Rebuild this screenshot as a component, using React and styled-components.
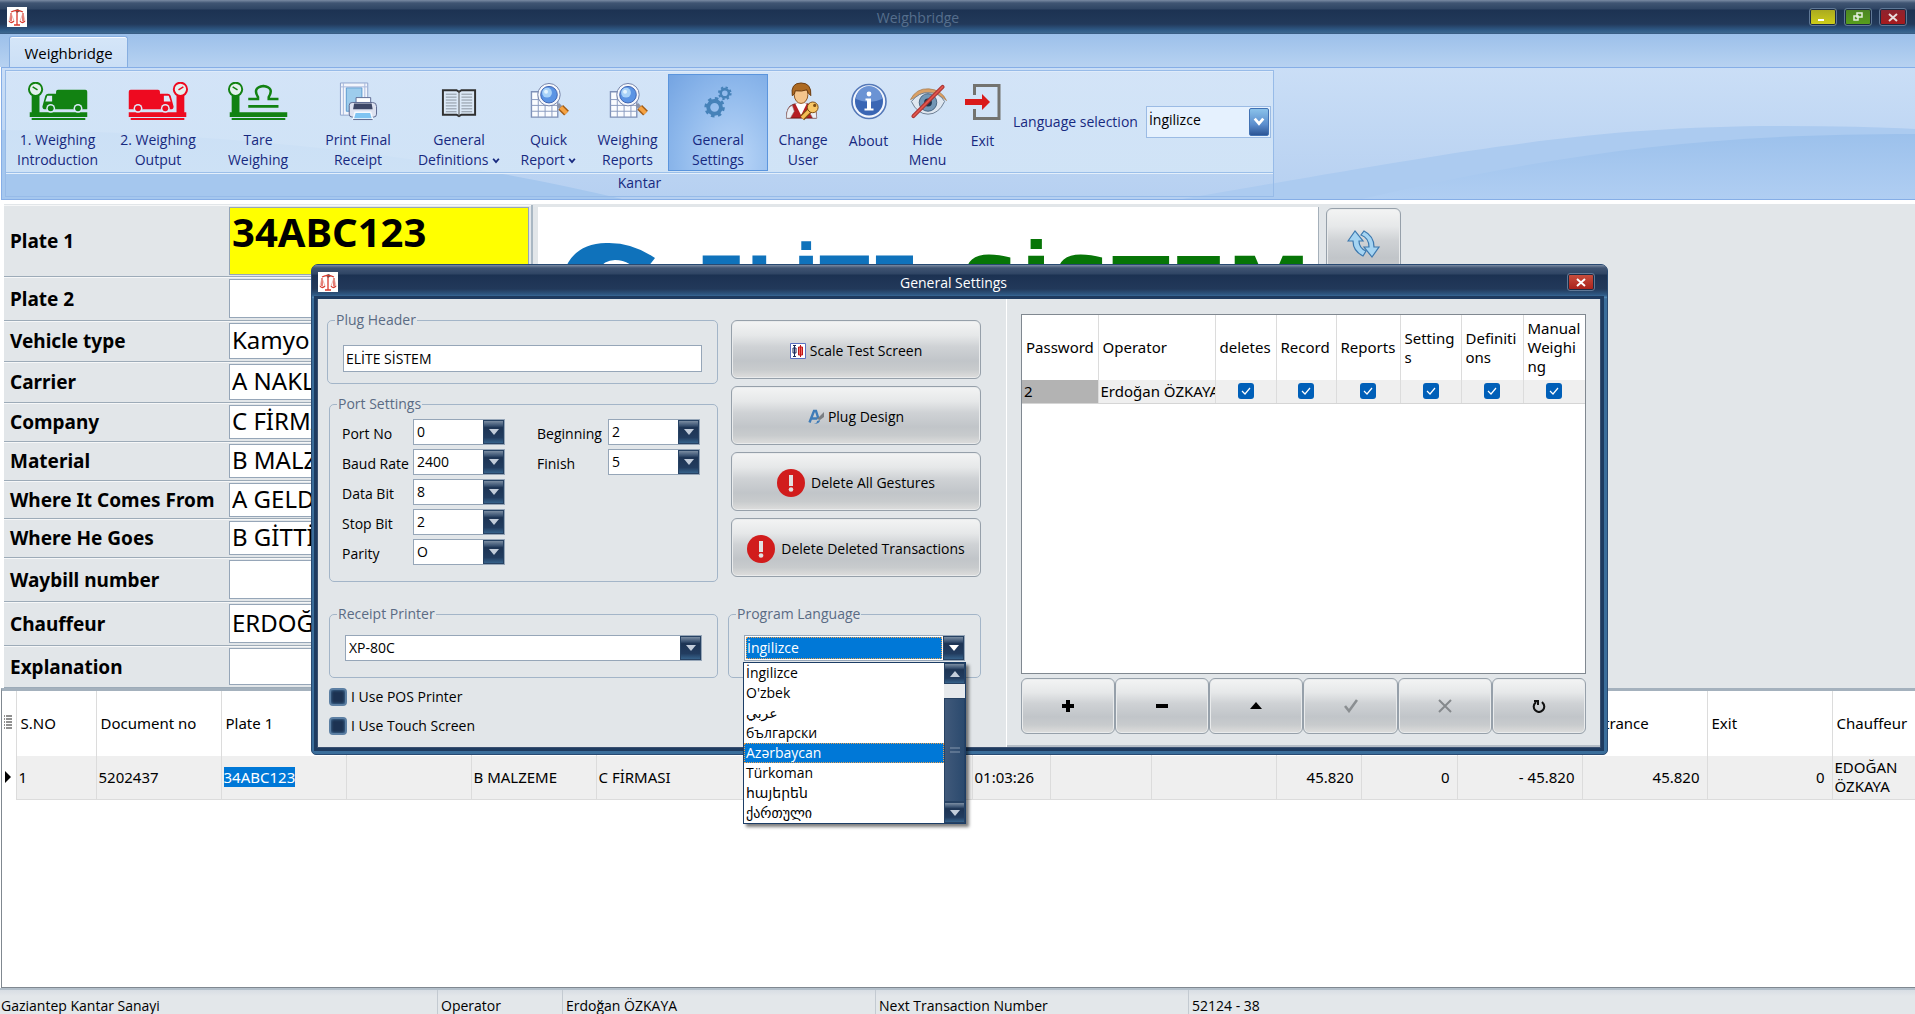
import React from 'react';
import styled, { createGlobalStyle, css } from 'styled-components';

const UI = `'Open Sans', 'Noto Sans', 'DejaVu Sans', sans-serif`;
const GRID = `'Noto Sans', 'DejaVu Sans', sans-serif`;
const NAVY = 'linear-gradient(#7a8ba3 0, #3f5472 3px, #2f4564 9px, #1c3252 10px, #22395a 24px, #2f5a86 30px, #5590bd 33px, #35547c 34px)';
const SILVER = 'linear-gradient(#f3f4f4 0, #e6e8e9 25%, #cfd2d5 45%, #c1c5c9 70%, #c8cbcd 85%, #dededd 100%)';

const GlobalStyle = createGlobalStyle`
  * { box-sizing: border-box; }
  body { margin: 0; background: #fff; font: 15px/20px ${UI}; color: #000; }
  button, input, select { font: inherit; color: inherit; margin: 0; }
  fieldset { margin: 0; min-width: 0; }
`;

const Page = styled.div`
  position: relative;
  display: flex;
  flex-direction: column;
  min-height: 100vh;
  overflow: hidden;
`;

const TitleBar = styled.header`
  display: grid;
  grid-template-columns: 100px 1fr 100px;
  align-items: center;
  height: 34px;
  padding: ${({ $dialog }) => ($dialog ? '0 0 0 6px' : '0 8px 0 7px')};
  background: ${({ $dialog }) => ($dialog ? NAVY : NAVY.replace('#5590bd', '#3d688f'))};
  border-radius: ${({ $dialog }) => ($dialog ? '5px 5px 0 0' : '0')};
  color: ${({ $dialog }) => ($dialog ? '#fff' : '#566f8d')};
`;

const TitleText = styled.h1`
  margin: 0;
  padding: ${({ $dialog }) => ($dialog ? '2px 18px 0 0' : '2px 84px 0 6px')};
  font-size: 14px;
  font-weight: 400;
  text-align: center;
`;

const WindowButtons = styled.div`
  display: flex;
  justify-content: flex-end;
  gap: 7px;
  padding-right: ${({ $dialog }) => ($dialog ? '12px' : '0')};
`;

const WindowButton = styled.button`
  display: grid;
  place-items: center;
  width: 28px;
  height: 18px;
  padding: 0;
  border: 1px solid #5f7896;
  border-radius: 3px;
  box-shadow: inset 0 0 0 1px #1b2b44;
  background: ${({ $tone }) => $tone};
`;

const TabStrip = styled.nav`
  display: flex;
  align-items: flex-end;
  height: 33px;
  padding-left: 9px;
  background: linear-gradient(#9cc0ea, #b7d2f1);
`;

const Tab = styled.button`
  width: 119px;
  height: 31px;
  padding: 1px 0 0;
  border: 1px solid #86aee0;
  border-bottom: 0;
  border-radius: 3px 3px 0 0;
  background: linear-gradient(#d5e6f8, #cbdff6);
  box-shadow: inset 0 1px #f6faff;
`;

const Ribbon = styled.section`
  display: grid;
  height: 133px;
  margin-left: 1px;
  border: 1px solid #86aee6;
  border-right: 0;
  background: #c5dbf4;
  & > * { grid-area: 1 / 1; }
`;

const Waves = styled.svg`
  width: 100%;
  height: 131px;
`;

const RibbonGroup = styled.div`
  display: flex;
  flex-direction: column;
  align-self: start;
  justify-self: start;
  margin: 2px 3px;
  border: 1px solid #97bbe8;
  box-shadow: inset 0 1px #f8fbff;
  z-index: 1;
`;

const RibbonItems = styled.div`
  display: flex;
  height: 101px;
  padding: 3px 1px 1px;
  background: linear-gradient(rgba(214, 230, 248, .75), rgba(212, 230, 247, .85));
`;

const GroupCaption = styled.div`
  height: 24px;
  border-top: 1px solid #9bbfe9;
  box-shadow: inset 0 1px #e4effb;
  color: #17297f;
  font-size: 14px;
  line-height: 20px;
  text-align: center;
`;

const RibbonButton = styled.button`
  display: flex;
  flex-direction: column;
  align-items: center;
  width: ${({ $width }) => $width}px;
  padding: 7px 0 0;
  border: 1px solid transparent;
  background: none;
  color: #17297f;
  font-size: 14px;
  white-space: pre;
  text-align: center;
  & > svg { height: 40px; margin-bottom: 9px; }
  ${({ $active }) => $active && css`
    border-color: #5b95dd;
    background: radial-gradient(ellipse at 65% 90%, #b4d2f6 10%, #8fb9ec 60%, #74a4e2);
  `}
`;

const LanguagePick = styled.label`
  display: flex;
  align-items: center;
  gap: 8px;
  padding: 0 1px 1px 4px;
  color: #17297f;
  font-size: 14px;
`;

const RibbonCombo = styled.span`
  display: grid;
  width: 125px;
  height: 32px;
  border: 1px solid #9bbbe4;
  background: #e5f1fe;
  & > * { grid-area: 1 / 1; }
  & > select {
    appearance: none;
    padding: 0 0 5px 2px;
    border: 0;
    background: none;
    color: #000;
  }
  & > span {
    display: grid;
    place-items: center;
    justify-self: end;
    width: 20px;
    margin: 1px;
    border: 1px solid #4272b3;
    border-radius: 2px;
    background: linear-gradient(#8ac2ea, #5b8dcd 60%, #2c5595);
    pointer-events: none;
  }
`;

const Workspace = styled.main`
  display: grid;
  grid-template-columns: 529px 789px 1fr;
  margin-left: 4px;
  padding-top: 5px;
  background: linear-gradient(#fff 4px, #e2e6e9 4px);
`;

const VehicleForm = styled.form`
  border-right: 2px solid #a9b7c3;
`;

const FormRow = styled.div`
  display: grid;
  grid-template-columns: 225px 1fr;
  height: ${({ $height }) => $height}px;
  padding: 2px 2px 2px 0;
  border-bottom: 1px solid #9dabb8;
  box-shadow: inset 0 1px #f6f7f8;
  & > label {
    align-self: center;
    padding-left: 6px;
    font: bold 19px/22px ${GRID};
  }
  & > input {
    min-width: 0;
    padding: 0 2px 2px;
    border: 1px solid #96a6b8;
    border-radius: 0;
    background: #fff;
    font: 24px/30px ${GRID};
  }
`;

const PlateRow = styled(FormRow)`
  & > input {
    padding-bottom: 18px;
    background: #ff0;
    font: bold 40px/48px ${GRID};
  }
`;

const LogoPane = styled.div`
  margin: 2px 3px 8px 5px;
  border-right: 1px solid #a5b0ba;
  background: #fff;
`;

const SilverButton = styled.button`
  display: flex;
  align-items: center;
  justify-content: center;
  gap: ${({ $gap }) => $gap || 4}px;
  padding: 0;
  border: 1px solid #96a0aa;
  border-radius: 6px;
  background: ${SILVER};
  box-shadow: inset 0 0 0 1px #e9ebec;
  font-size: 14px;
  white-space: nowrap;
`;

const ActionButton = styled(SilverButton)`
  padding-top: 2px;
`;

const RefreshButton = styled(SilverButton)`
  width: 75px;
  height: 72px;
  margin: 3px 4px;
`;

const TransactionPane = styled.section`
  flex: 1;
  margin-left: 1px;
  border: 1px solid #808890;
  border-top: 3px solid #a4b1bd;
  border-right: 0;
  background: #fff;
  overflow: hidden;
`;

const TransactionTable = styled.table`
  width: 100%;
  border-collapse: collapse;
  table-layout: fixed;
  font: 15px/19px ${GRID};
  th, td {
    padding: 0 7px 0 2px;
    border-right: 1px solid #dcdcdc;
    font-weight: 400;
    text-align: left;
  }
  th { height: 65px; padding-left: 4px; }
  td { height: 43px; background: #efefef; border-bottom: 1px solid #dcdcdc; }
  th:first-child, td:first-child { padding: 0 2px; background: #fff; border-bottom: 0; }
  th:last-child, td:last-child { border-right: 0; padding-right: 0; }
`;

const NumberCell = styled.td`
  && { text-align: right; }
`;

const Mark = styled.mark`
  background: #0078d7;
  color: #fff;
`;

const StatusBar = styled.footer`
  display: grid;
  grid-template-columns: 437px 125px 313px 313px 1fr;
  height: 26px;
  border-top: 2px solid #b3bfca;
  background: linear-gradient(#d8dee4, #e3e7ea 6px);
  font-size: 14px;
  & > span { padding: 6px 0 0 1px; white-space: nowrap; }
  & > span + span { padding-left: 3px; border-left: 1px solid #c3cad1; }
`;

/* dialog */

const Dialog = styled.div`
  position: absolute;
  top: 264px;
  left: 311px;
  right: 307px;
  border-radius: 7px 7px 5px 5px;
  border: 1px solid #294a72;
  background: #3b6e9b;
`;

const DialogBody = styled.div`
  display: grid;
  grid-template-columns: 689px 1fr;
  margin: 0 6px 6px 5px;
  border: 1px solid #3a5070;
  border-top: 0;
  box-shadow: 0 0 0 3px #1e3b60;
  background: #e2e6e9;
`;

const SettingsPane = styled.div`
  display: grid;
  grid-template-columns: 391px 253px;
  grid-template-rows: 282px 88px auto;
  align-content: start;
  column-gap: 10px;
  padding: 11px 0 7px 9px;
  border-right: 1px solid #fff;
`;

const GroupStack = styled.div`
  display: flex;
  flex-direction: column;
  gap: 10px;
`;

const Group = styled.fieldset`
  height: ${({ $height }) => $height}px;
  margin-left: ${({ $indent }) => $indent || 0}px;
  padding: 0 15px;
  border: 1px solid #a3b5c8;
  border-radius: 5px;
  & > legend {
    margin-left: -8px;
    padding: 0 1px;
    color: #5a6b84;
    font-size: 14px;
    line-height: 20px;
  }
`;

const HeaderInput = styled.input`
  width: 100%;
  height: 27px;
  margin-top: 15px;
  padding: 0 2px 1px;
  border: 1px solid #96a6b8;
  font-size: 14px;
`;

const PortGrid = styled.div`
  display: grid;
  grid-template-columns: 71px 92px 103px 92px;
  row-gap: 4px;
  margin: 5px -2px 0 -3px;
  align-items: center;
  font-size: 14px;
`;

const PortLabel = styled.label`
  padding: 3px 0 0 ${({ $second }) => ($second ? 32 : 0)}px;
  white-space: nowrap;
`;

const ComboSlot = styled.div`
  margin-top: 11px;
`;

const GroupSlot = styled.div`
  padding-top: 12px;
`;

const Combo = styled.span`
  position: relative;
  display: grid;
  width: 100%;
  height: 26px;
  border: 1px solid #96a6b8;
  background: #fff;
  font-size: 14px;
  & > * { grid-area: 1 / 1; }
  & > select {
    appearance: none;
    min-width: 0;
    padding: 0 0 1px 3px;
    border: 0;
    border-radius: 0;
    background: none;
    ${({ $open }) => $open && css`
      margin: 1px 22px 1px 1px;
      padding-left: 1px;
      background: #0078d7;
      color: #fff;
      outline: 1px dotted #e8a050;
      outline-offset: -1px;
    `}
  }
`;

const ArrowBox = styled.span`
  display: grid;
  place-items: center;
  justify-self: end;
  width: 21px;
  height: ${({ $height }) => $height || 24}px;
  border: 1px solid #274263;
  background: linear-gradient(#7b8da2, #3d5574 20%, #1d3454 30%, #223c5f 75%, #36628a);
  pointer-events: none;
`;

const Options = styled.ul`
  position: absolute;
  z-index: 2;
  top: 26px;
  left: -2px;
  width: 223px;
  margin: 0;
  padding: 0 21px 0 0;
  border: 1px solid #1c3d66;
  background: #fff;
  box-shadow: 3px 3px 3px rgba(0, 0, 0, .5);
  list-style: none;
`;

const Option = styled.li`
  height: 20px;
  padding-left: 2px;
  line-height: 20px;
  ${({ $selected }) => $selected && css`
    background: #0078d7;
    color: #fff;
    outline: 1px dotted #e8a050;
    outline-offset: -1px;
  `}
`;

const ScrollBar = styled.li`
  position: absolute;
  top: 0;
  right: 0;
  bottom: 0;
  display: flex;
  flex-direction: column;
  width: 21px;
  background: #e6e9ec;
`;

const ScrollThumb = styled.div`
  display: grid;
  place-items: center;
  flex: 1;
  margin-top: 14px;
  border: 1px solid #274263;
  background: linear-gradient(90deg, #40597a, #2b4a6e);
`;

const CheckList = styled.div`
  padding: 2px 0 0 2px;
`;

const Check = styled.label`
  display: flex;
  align-items: center;
  gap: 4px;
  height: 29px;
  font-size: 14px;
  & > input {
    appearance: none;
    width: 18px;
    height: 18px;
    border: 2px solid #5c7fa3;
    border-radius: 4px;
    background: #1c3252;
    box-shadow: inset 0 0 3px #4d80ab;
  }
`;

const ActionStack = styled.div`
  display: grid;
  grid-auto-rows: 59px;
  row-gap: 7px;
  align-content: start;
  padding: 10px 0 0 3px;
`;

const OperatorPane = styled.div`
  display: flex;
  flex-direction: column;
  padding: 15px 14px 11px 14px;
  border-bottom: 2px solid #b5bec7;
  min-width: 0;
`;

const OperatorBox = styled.div`
  height: 360px;
  border: 1px solid #808890;
  background: #fff;
  overflow: hidden;
`;

const OperatorTable = styled.table`
  width: 100%;
  border-collapse: collapse;
  table-layout: fixed;
  font: 15px/19px ${GRID};
  th, td {
    height: 23px;
    padding: 0 2px 0 4px;
    border-right: 1px solid #dcdcdc;
    font-weight: 400;
    text-align: left;
  }
  th { height: 65px; overflow-wrap: anywhere; }
  td { padding: 0 0 0 2px; background: #efefef; border-bottom: 1px solid #d5d5d5; overflow: hidden; white-space: nowrap; }
  td:first-child { background: #b3b3b3; }
  td:nth-child(n + 3) { padding: 0; line-height: 16px; text-align: center; }
`;

const TickBox = styled.input`
  appearance: none;
  display: inline-block;
  vertical-align: top;
  width: 16px;
  height: 16px;
  border-radius: 3px;
  background: #005fb8 url("data:image/svg+xml,%3Csvg xmlns='http://www.w3.org/2000/svg' viewBox='0 0 16 16'%3E%3Cpath d='M4 8l3 3 5-6' fill='none' stroke='white' stroke-width='1.2'/%3E%3C/svg%3E");
`;

const NavButtons = styled.div`
  display: grid;
  grid-template-columns: repeat(6, 1fr);
  height: 56px;
  margin-top: 4px;
`;

/* icons */

const ScalesIcon = () => (
  <svg width="20" height="20" viewBox="0 0 20 20">
    <path d="M0 0h20v20H0z" fill="#fff" />
    <path d="M8 3l3-1 2 2-3 2z" fill="#555" />
    <path d="M10 5v13M7 18h6M4 5q6-3 12 0M4 6v8M16 6v8M2 14q2 3 5 0M13 14q2 3 5 0" fill="none" stroke="#d8382c" strokeWidth="1.3" />
    <path d="M4 6L2 14M4 6l3 8M16 6l-3 8M16 6l2 8" stroke="#e59a90" strokeWidth=".7" />
  </svg>
);

const Platform = ({ color, mirrored, children }) => (
  <svg width="62" height="40" viewBox="0 0 62 40">
    <g transform={mirrored ? 'matrix(-1 0 0 1 62 0)' : undefined} fill={color}>
      <circle cx="8" cy="7.5" r="6.8" fill="#e4f0ee" stroke={color} strokeWidth="2" />
      <path d="M5 5l5 3" stroke={color} strokeWidth="1.6" />
      <path d="M4 14h8v17H4zM2 31h59v5H2zM4 37h55v2H4z" />
      {children}
    </g>
  </svg>
);

const Truck = () => (
  <>
    <path d="M29 10q0-2 2-2h28q2 0 2 2v18H18q-3 0-3-3l3-11q1-2 3-2h8z" />
    <path d="M20 14h5v6h-7z" fill="#dcebfa" />
    <circle cx="23.5" cy="27" r="4.500" fill="#dcebfa" />
    <circle cx="23.5" cy="27" r="3" />
    <circle cx="51.5" cy="27" r="4.500" fill="#dcebfa" />
    <circle cx="51.5" cy="27" r="3" />
  </>
);

const LibraSign = ({ color }) => (
  <path d="M21 17.500h10v-2q-6-10 5.500-11.500 11.500 1.500 5.500 11.500v2h10M21 25h31" fill="none" stroke={color} strokeWidth="2.600" />
);

const PrintIcon = () => (
  <svg width="40" height="40" viewBox="0 0 40 40">
    <path d="M2 1h28v33H2z" fill="#f2f5fc" stroke="#8fa3cc" />
    <path d="M8 6h16v24H8z" fill="#9dccec" stroke="#5b9bd0" />
    <path d="M5 1v33M27 1v33M2 5h28" stroke="#a9b9dc" />
    <path d="M18 16h15v8H18z" fill="#fff" stroke="#5f6c94" />
    <path d="M11 24q0-3 3-3h21q4 0 4 4v8q0 3-3 3H14q-3 0-3-3z" fill="#dde2f0" stroke="#5b688f" />
    <path d="M16 22h18l1 6H15z" fill="#3d4766" />
    <path d="M17 31h16l2 7H15z" fill="#7fc4f2" stroke="#f5f9ff" strokeWidth="1.5" />
    <path d="M15 38.500h20" stroke="#5b688f" />
  </svg>
);

const BookIcon = () => (
  <svg width="36" height="40" viewBox="0 0 36 40">
    <path d="M1.500 8.500h14l2.500 1.500 2.500-1.500h14v25h-14L18 35l-2.500-1.500h-14z" fill="#dbe8f6" stroke="#303030" strokeWidth="2" />
    <path d="M18 9v26" stroke="#555" />
    <path d="M4.500 12.500h11M4.500 15.500h11M4.500 18.500h11M4.500 21.500h11M4.500 24.500h11M4.500 27.500h11M4.500 30.500h11M20.500 12.500h11M20.500 15.500h11M20.500 18.500h11M20.500 21.500h11M20.500 24.500h11M20.500 27.500h11M20.500 30.500h11" stroke="#8a939d" />
  </svg>
);

const ReportIcon = () => (
  <svg width="40" height="40" viewBox="0 0 40 40">
    <path d="M2 10h27v26H2z" fill="#fafcff" stroke="#7f91b8" strokeWidth="1.4" />
    <path d="M2 18h27M2 24h27M2 30h27M9 10v26M16 10v26M23 10v26" stroke="#8b9cc0" />
    <path d="M29 23l4 4" stroke="#8a93a8" strokeWidth="4" />
    <path d="M32 26l6 6" stroke="#a35c14" strokeWidth="7" />
    <path d="M32 26l6 6" stroke="#f5a344" strokeWidth="4" />
    <circle cx="20" cy="13" r="11.500" fill="#f6f8fc" stroke="#7382a8" />
    <circle cx="20" cy="13" r="8.500" fill="#5b94e4" stroke="#3c62b0" />
    <circle cx="18" cy="11" r="5" fill="#a9d3f9" />
    <circle cx="17" cy="10" r="2" fill="#e4f4ff" />
  </svg>
);

const GearsIcon = () => (
  <svg width="32" height="40" viewBox="0 0 32 40" fill="none" stroke="#4682b9">
    <circle cx="12.5" cy="26" r="6.500" strokeWidth="4" />
    <circle cx="12.5" cy="26" r="9" strokeWidth="3" strokeDasharray="3.534" />
    <circle cx="23" cy="11.5" r="4.200" strokeWidth="2.600" />
    <circle cx="23" cy="11.5" r="6" strokeWidth="2" strokeDasharray="2.356" />
  </svg>
);

const UserIcon = () => (
  <svg width="38" height="40" viewBox="0 0 38 40">
    <path d="M2 37q0-12 7-14l8-2 9 2q7 2 7 14z" fill="#b51f24" stroke="#6d1a14" />
    <path d="M11 22l6 12 6-12-6-1z" fill="#fff" />
    <path d="M2 37q0-11 6-13l2 6-4 7zM33 37q0-11-6-13l-2 6 4 7z" fill="#eceff5" stroke="#9a8f90" strokeWidth=".6" />
    <ellipse cx="17" cy="13" rx="7" ry="9" fill="#f4c58c" stroke="#8c5520" />
    <path d="M8 14Q6 1 17 1t10 13q-3-2-4-6-5 2-12 1 0 4-3 5z" fill="#ad6a22" stroke="#6b3c10" />
    <path d="M27 28L18 37" stroke="#7d4c10" strokeWidth="6" />
    <path d="M27 28L18 37" stroke="#f5bd55" strokeWidth="3.500" />
    <circle cx="29" cy="26" r="5.500" fill="#f8c765" stroke="#7d4c10" />
    <circle cx="31" cy="24" r="1.600" fill="#7d4c10" />
  </svg>
);

const InfoIcon = () => (
  <svg width="38" height="40" viewBox="0 0 38 40">
    <circle cx="19" cy="19.5" r="17" fill="#f2f6fd" stroke="#5478b8" strokeWidth="1.600" />
    <circle cx="19" cy="19.5" r="14" fill="#3a66b4" />
    <path d="M6 17a13 13 0 0 1 26 0q-13 6-26 0z" fill="#6b93d4" />
    <circle cx="19" cy="12" r="2.400" fill="#fff" />
    <path d="M15.500 16.500h5.500v10h2.500v2h-9v-2H17v-8h-1.500z" fill="#fff" />
  </svg>
);

const EyeIcon = () => (
  <svg width="38" height="40" viewBox="0 0 38 40">
    <path d="M1 18Q7 6 20 7t18 12q-9-8-18-7T1 18z" fill="#d9a066" stroke="#9a6c3c" strokeWidth=".6" />
    <path d="M2 20q8-10 18-9 11 0 16 9-6 13-17 13T2 20z" fill="#dfe7f0" stroke="#6c7d92" />
    <circle cx="19" cy="21" r="9" fill="#7397b5" stroke="#46647f" />
    <circle cx="19" cy="21" r="4" fill="#22344a" />
    <path d="M4 35L34 5" stroke="#a83232" strokeWidth="4" strokeLinecap="round" />
    <path d="M4 35L34 5" stroke="#e0564c" strokeWidth="2" strokeLinecap="round" />
  </svg>
);

const ExitIcon = () => (
  <svg width="36" height="40" viewBox="0 0 36 40">
    <path d="M9.500 13V3.500h24.500v33H9.500V27" fill="none" stroke="#73736f" strokeWidth="3" />
    <path d="M0 17h17v-5l8 8-8 8v-5H0z" fill="#da1a1a" />
  </svg>
);

const Chevron = ({ color = '#17297f', size = 8 }) => (
  <svg width={size} height={size} viewBox="0 0 7 7"><path d="M1 1.500l2.500 3 2.500-3" fill="none" stroke={color} strokeWidth="1.600" /></svg>
);

const Triangle = ({ up, color = '#c3cddb' }) => (
  <svg width="10" height="6" viewBox="0 0 10 6"><path d={up ? 'M0 6h10L5 0z' : 'M0 0h10L5 6z'} fill={color} /></svg>
);

const RefreshIcon = () => (
  <svg width="34" height="28" viewBox="0 0 34 28" fill="#a5d4f2" stroke="#3c78ae" strokeWidth="1.200">
    <path d="M8 1L1 11h5q0 10 10 15l3-5q-7-3-7-10h4z" />
    <path d="M25 27l7-10h-5Q27 6 17 1l-3 4q8 3 8 12h-5z" />
  </svg>
);

const AlertIcon = () => (
  <svg width="28" height="28" viewBox="0 0 28 28">
    <circle cx="14" cy="14" r="14" fill="#d11c1c" />
    <path d="M12 6h4v11h-4z" fill="#e2e2e2" />
    <circle cx="14" cy="20.5" r="2.300" fill="#e2e2e2" />
  </svg>
);

const ScaleTestIcon = () => (
  <svg width="16" height="16" viewBox="0 0 16 16">
    <path d="M.5.500h15v15H.5z" fill="#fff" stroke="#5a70c0" />
    <path d="M4.500 2v12M3 5h3v5H3zM3 2.500h3M3 13.500h3" fill="#fff" stroke="#1c2c5c" />
    <path d="M10.500 2v12M8.500 4h4v8h-4z" fill="#f26a60" stroke="#c01818" />
  </svg>
);

const DesignIcon = () => (
  <svg width="16" height="16" viewBox="0 0 16 16">
    <path d="M1.500 13.500L6 2h2l2.500 8M3.500 9.500H9" fill="none" stroke="#3f7cb8" strokeWidth="2.400" />
    <path d="M16 3v5l-4 3-3-1z" fill="#7b7f83" />
    <path d="M5 15q4 0 4-3l3-1q0 4-7 4z" fill="#3f7cb8" />
  </svg>
);

const EliteLogo = () => (
  <svg width="780" height="100" viewBox="538 207 780 100">
    <path d="M560 300q0-56 46-57 26-1 49 15l-14 18q-10-16-26-16-22 0-24 40z" fill="#0f72bb" />
    <g fontFamily="'DejaVu Sans', sans-serif" fontWeight="bold">
      <text x="696" y="309" fontSize="73" fill="#0f72bb">ELİTE</text>
      <text x="960" y="317" fontSize="84" fill="#077507">SİSTEM</text>
    </g>
  </svg>
);

const RowMenuIcon = () => (
  <svg width="10" height="14"><path d="M0 1h1M2 1h6M0 4h1M2 4h6M0 7h1M2 7h6M0 10h1M2 10h6M0 13h1M2 13h6" stroke="#222" /></svg>
);

const NAV_SHAPES = [
  ['Add', <path d="M5 1h4v4h4v4H9v4H5V9H1V5h4z" />],
  ['Remove', <path d="M1 5h12v4H1z" />],
  ['Edit', <path d="M1 10h12L7 3z" />],
  ['Post', <path d="M1 7l4 5 8-11" fill="none" stroke="#8b8f92" strokeWidth="2.600" />],
  ['Cancel', <path d="M1 1l12 12M13 1L1 13" stroke="#85898c" strokeWidth="2" />],
  ['Refresh', <path d="M4 3q-4 4-1 8 4 4 8 0 3-4-1-8M2 2h4v4" fill="none" stroke="#111" strokeWidth="2" />],
];

const GREEN = '#128212';
const RIBBON = [
  ['1. Weighing\nIntroduction', 101, <Platform color={GREEN}><Truck /></Platform>],
  ['2. Weighing\nOutput', 100, <Platform color="#ee0a20" mirrored><Truck /></Platform>],
  ['Tare\nWeighing', 100, <Platform color={GREEN}><LibraSign color={GREEN} /></Platform>],
  ['Print Final\nReceipt', 100, <PrintIcon />],
  ['General\nDefinitions', 102, <BookIcon />, 'menu'],
  ['Quick\nReport', 77, <ReportIcon />, 'menu'],
  ['Weighing\nReports', 81, <ReportIcon />],
  ['General\nSettings', 100, <GearsIcon />, 'active'],
  ['Change\nUser', 70, <UserIcon />],
  ['About', 61, <InfoIcon />],
  ['Hide\nMenu', 57, <EyeIcon />],
  ['Exit', 53, <ExitIcon />],
];

const FIELDS = [
  ['Plate 2', '', 44],
  ['Vehicle type', 'Kamyon', 41],
  ['Carrier', 'A NAKLİYE', 41],
  ['Company', 'C FİRMASI', 39],
  ['Material', 'B MALZEME', 39],
  ['Where It Comes From', 'A GELDİ', 38],
  ['Where He Goes', 'B GİTTİ', 39],
  ['Waybill number', '', 44],
  ['Chauffeur', 'ERDOĞAN', 44],
  ['Explanation', '', 42],
];

const WIDTHS = [14, 80, 125, 125, 125, 125, 175, 100, 101, 78, 101, 125, 85, 96, 125, 125, 125];
const HEADS = ['', 'S.NO', 'Document no', 'Plate 1', '', '', '', '', '', '', '', '', '', '', '', 'Entrance', 'Exit', 'Chauffeur'];
const CELLS = ['1', '5202437', <Mark>34ABC123</Mark>, '', 'B MALZEME', 'C FİRMASI', '', '', '01:03:26', '', ''];
const AMOUNTS = ['45.820', '0', '- 45.820', '45.820', '0'];

const PORTS = [
  ['Port No', '0'], ['Beginning', '2'],
  ['Baud Rate', '2400'], ['Finish', '5'],
  ['Data Bit', '8'], null,
  ['Stop Bit', '2'], null,
  ['Parity', 'O'], null,
];

const LANGUAGES = ['İngilizce', "O'zbek", 'عربي', 'български', 'Azərbaycan', 'Türkoman', 'հայերեն', 'ქართული'];
const OPERATOR_COLUMNS = [['Password', 76], ['Operator', 117], ['deletes', 61], ['Record', 60], ['Reports', 64], ['Settings', 61], ['Definitions', 62], ['Manual Weighing', 62]];

const ComboBox = ({ id, label, value, open, children }) => (
  <Combo $open={open}>
    <select id={id} aria-label={label} defaultValue={value}><option>{value}</option></select>
    <ArrowBox><Triangle color={open ? '#fff' : undefined} /></ArrowBox>
    {children}
  </Combo>
);

const RibbonBar = () => (
  <Ribbon>
    <Waves viewBox="0 0 1913 131" preserveAspectRatio="none">
      <defs>
        <linearGradient id="sky" x2="0" y2="1"><stop stopColor="#cadef6" /><stop offset="1" stopColor="#b6d0f1" /></linearGradient>
        <linearGradient id="wave" x2="0" y2="1"><stop stopColor="#9cc1ec" /><stop offset="1" stopColor="#b0cef2" /></linearGradient>
      </defs>
      <path d="M0 0h1913v131H0z" fill="url(#sky)" />
      <path d="M0 62Q350 66 620 131H0z" fill="#a5c7ee" />
      <path d="M1180 131C1450 85 1580 58 1780 58q80 0 133 3v70z" fill="#accbf0" />
      <path d="M1360 131C1560 85 1700 66 1913 66v65z" fill="url(#wave)" />
    </Waves>
    <RibbonGroup>
      <RibbonItems>
        {RIBBON.map(([text, width, icon, kind]) => (
          <RibbonButton key={text} type="button" $width={width} $active={kind === 'active'}>
            {icon}
            <span>{text}{kind === 'menu' && <> <Chevron /></>}</span>
          </RibbonButton>
        ))}
        <LanguagePick>
          Language selection
          <RibbonCombo>
            <select defaultValue="İngilizce"><option>İngilizce</option></select>
            <span><Chevron color="#fff" size={12} /></span>
          </RibbonCombo>
        </LanguagePick>
      </RibbonItems>
      <GroupCaption>Kantar</GroupCaption>
    </RibbonGroup>
  </Ribbon>
);

const Transactions = () => (
  <TransactionPane>
    <TransactionTable>
      <colgroup>{WIDTHS.map((w, i) => <col key={i} width={w} />)}<col /></colgroup>
      <thead>
        <tr>{HEADS.map((h, i) => <th key={i}>{i === 0 ? <RowMenuIcon /> : h}</th>)}</tr>
      </thead>
      <tbody>
        <tr>
          <td><svg width="8" height="12"><path d="M1 0v12l6-6z" /></svg></td>
          {CELLS.map((c, i) => <td key={i}>{c}</td>)}
          {AMOUNTS.map((a, i) => <NumberCell key={i}>{a}</NumberCell>)}
          <td>EDOĞAN ÖZKAYA</td>
        </tr>
      </tbody>
    </TransactionTable>
  </TransactionPane>
);

const PortGroup = () => (
  <Group $height={188} $indent={2}>
    <legend>Port Settings</legend>
    <PortGrid>
      {PORTS.map((port, i) => port ? (
        <React.Fragment key={port[0]}>
          <PortLabel htmlFor={`port-${i}`} $second={i % 2 === 1}>{port[0]}</PortLabel>
          <ComboBox id={`port-${i}`} value={port[1]} />
        </React.Fragment>
      ) : <React.Fragment key={i}><span /><span /></React.Fragment>)}
    </PortGrid>
  </Group>
);

const LanguageList = () => (
  <Options role="listbox">
    {LANGUAGES.map((name) => (
      <Option key={name} role="option" $selected={name === 'Azərbaycan'}>{name}</Option>
    ))}
    <ScrollBar aria-hidden="true">
      <ArrowBox $height={21}><Triangle up /></ArrowBox>
      <ScrollThumb><svg width="10" height="6"><path d="M0 1h10M0 5h10" stroke="#8496ad" /></svg></ScrollThumb>
      <ArrowBox $height={21}><Triangle /></ArrowBox>
    </ScrollBar>
  </Options>
);

const OperatorGrid = () => (
  <OperatorBox>
    <OperatorTable>
      <colgroup>{OPERATOR_COLUMNS.map(([name, w]) => <col key={name} width={w} />)}</colgroup>
      <thead><tr>{OPERATOR_COLUMNS.map(([name]) => <th key={name}>{name}</th>)}</tr></thead>
      <tbody>
        <tr>
          <td>2</td>
          <td>Erdoğan ÖZKAYA</td>
          {OPERATOR_COLUMNS.slice(2).map(([name]) => (
            <td key={name}><TickBox type="checkbox" aria-label={name} defaultChecked /></td>
          ))}
        </tr>
      </tbody>
    </OperatorTable>
  </OperatorBox>
);

const GeneralSettings = () => (
  <Dialog role="dialog" aria-label="General Settings">
    <TitleBar $dialog>
      <ScalesIcon />
      <TitleText as="h2" $dialog>General Settings</TitleText>
      <WindowButtons $dialog>
        <WindowButton $tone="linear-gradient(#c9503f, #a8201a)" aria-label="Close">
          <svg width="10" height="9"><path d="M1 1l8 7M9 1L1 8" stroke="#fff" strokeWidth="2" /></svg>
        </WindowButton>
      </WindowButtons>
    </TitleBar>
    <DialogBody>
      <SettingsPane>
        <GroupStack>
          <Group $height={74}>
            <legend>Plug Header</legend>
            <HeaderInput aria-label="Plug Header" defaultValue="ELİTE SİSTEM" />
          </Group>
          <PortGroup />
        </GroupStack>
        <ActionStack>
          <ActionButton><ScaleTestIcon />Scale Test Screen</ActionButton>
          <ActionButton><DesignIcon />Plug Design</ActionButton>
          <ActionButton $gap={6}><AlertIcon />Delete All Gestures</ActionButton>
          <ActionButton $gap={6}><AlertIcon />Delete Deleted Transactions</ActionButton>
        </ActionStack>
        <GroupSlot>
          <Group $height={74} $indent={2}>
            <legend>Receipt Printer</legend>
            <ComboSlot><ComboBox label="Receipt Printer" value="XP-80C" /></ComboSlot>
          </Group>
        </GroupSlot>
        <GroupSlot>
          <Group $height={74}>
            <legend>Program Language</legend>
            <ComboSlot>
              <ComboBox label="Program Language" value="İngilizce" open>
                <LanguageList />
              </ComboBox>
            </ComboSlot>
          </Group>
        </GroupSlot>
        <CheckList>
          <Check><input type="checkbox" />I Use POS Printer</Check>
          <Check><input type="checkbox" />I Use Touch Screen</Check>
        </CheckList>
      </SettingsPane>
      <OperatorPane>
        <OperatorGrid />
        <NavButtons>
          {NAV_SHAPES.map(([name, shape]) => (
            <SilverButton key={name} aria-label={name}><svg width="14" height="14" viewBox="0 0 14 14">{shape}</svg></SilverButton>
          ))}
        </NavButtons>
      </OperatorPane>
    </DialogBody>
  </Dialog>
);

const App = () => (
  <Page>
    <GlobalStyle />
    <TitleBar>
      <ScalesIcon />
      <TitleText>Weighbridge</TitleText>
      <WindowButtons>
        <WindowButton $tone="linear-gradient(#a8a820, #d0cf18)" aria-label="Minimize">
          <svg width="14" height="10"><path d="M2 7h6v2H2z" fill="#fff" /></svg>
        </WindowButton>
        <WindowButton $tone="linear-gradient(#4c8424, #58a01c)" aria-label="Restore">
          <svg width="12" height="10"><path d="M5 1h5v4H5zM2 4h4v4H2z" fill="none" stroke="#e5eee0" strokeWidth="1.5" /></svg>
        </WindowButton>
        <WindowButton $tone="linear-gradient(#8b2430, #a81a1c)" aria-label="Close">
          <svg width="10" height="9"><path d="M1 1l8 7M9 1L1 8" stroke="#e8dcdc" strokeWidth="2" /></svg>
        </WindowButton>
      </WindowButtons>
    </TitleBar>
    <TabStrip><Tab type="button">Weighbridge</Tab></TabStrip>
    <RibbonBar />
    <Workspace>
      <VehicleForm>
        <PlateRow $height={72}>
          <label htmlFor="plate-1">Plate 1</label>
          <input id="plate-1" defaultValue="34ABC123" />
        </PlateRow>
        {FIELDS.map(([label, value, height]) => (
          <FormRow key={label} $height={height}>
            <label htmlFor={label}>{label}</label>
            <input id={label} defaultValue={value} />
          </FormRow>
        ))}
      </VehicleForm>
      <LogoPane><EliteLogo /></LogoPane>
      <RefreshButton aria-label="Refresh"><RefreshIcon /></RefreshButton>
    </Workspace>
    <Transactions />
    <StatusBar>
      <span>Gaziantep Kantar Sanayi</span>
      <span>Operator</span>
      <span>Erdoğan ÖZKAYA</span>
      <span>Next Transaction Number</span>
      <span>52124 - 38</span>
    </StatusBar>
    <GeneralSettings />
  </Page>
);

export default App;
